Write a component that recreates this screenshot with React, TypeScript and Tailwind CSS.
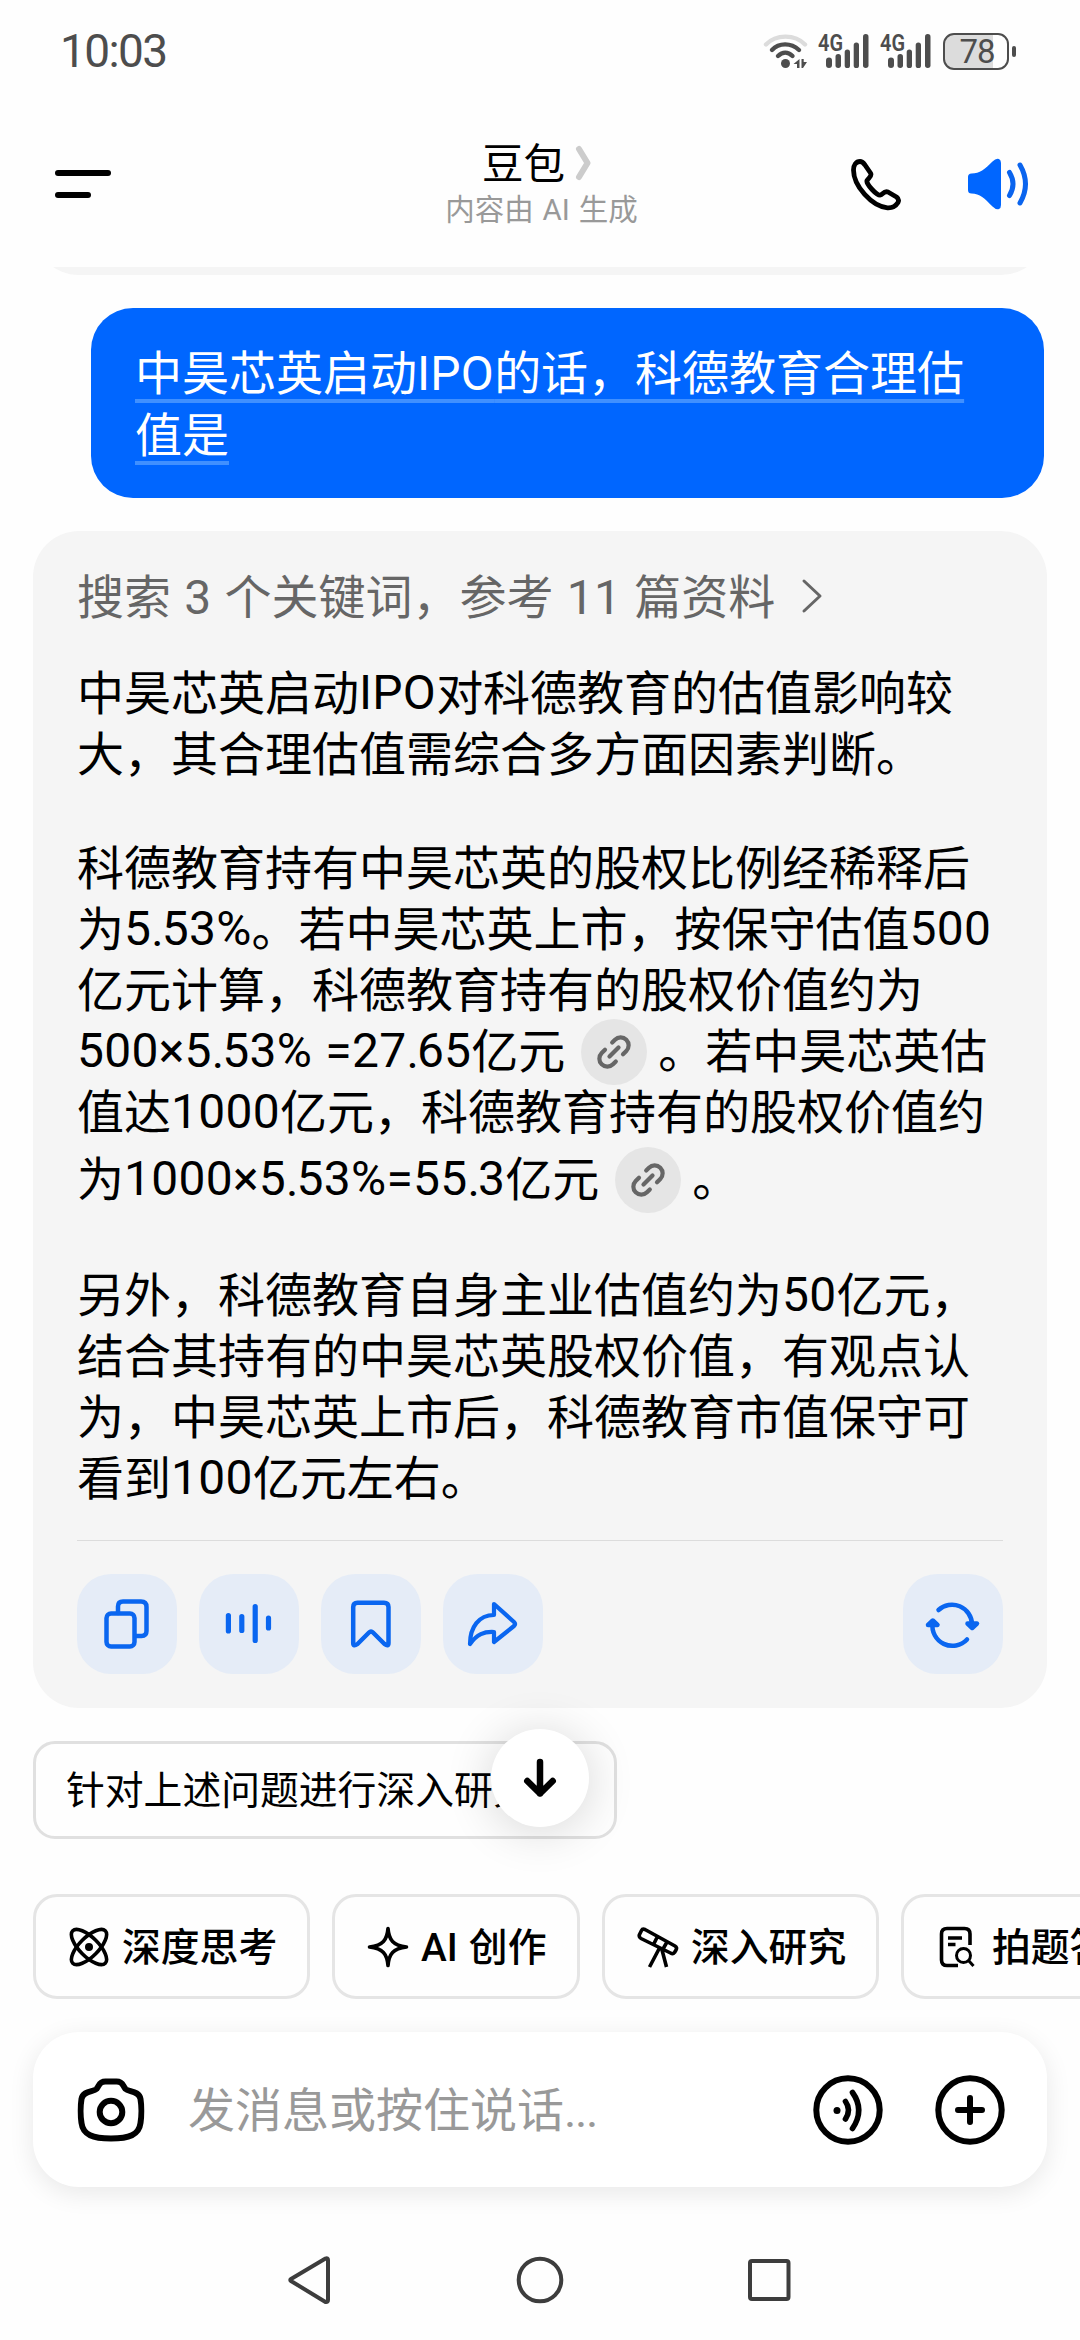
import type { ReactNode } from "react";

const FONT = 'font-[Roboto,"Noto_Sans_CJK_SC",sans-serif]';

// Latin runs are drawn a touch larger than the Han text, with tighter full stops
function Run({ text }: { text: string }) {
  return (
    <>
      {text.split(/([A-Za-z0-9%×= ]+|\.)/).map((part, i) => {
        if (i % 2 === 0) return <span key={i}>{part}</span>;
        return (
          <span
            key={i}
            className={part === "." ? "tracking-[-0.04em]" : "text-[1.02em] tracking-[0.006em] [word-spacing:0.02em]"}
          >
            {part}
          </span>
        );
      })}
    </>
  );
}

function Line({ children, className = "h-[61px]" }: { children: ReactNode; className?: string }) {
  return <div className={`flex items-center whitespace-pre ${className}`}>{children}</div>;
}

function Signal() {
  return (
    <svg width="50" height="36" viewBox="0 0 50 36" fill="#4d4d4d" className="overflow-visible">
      <text x="-1" y="17.500" fontSize="23" fontWeight="600" fontFamily="Roboto, sans-serif" textLength="25" lengthAdjust="spacingAndGlyphs">
        4G
      </text>
      <rect x="7" y="24.500" width="6" height="10.500" rx="3" />
      <rect x="16.500" y="21" width="5.500" height="14" rx="2.700" />
      <rect x="25.700" y="16.500" width="5.300" height="18.500" rx="2.600" />
      <rect x="34.700" y="9.500" width="5.300" height="25.500" rx="2.600" />
      <rect x="44" y="1" width="5.500" height="34" rx="2.700" />
    </svg>
  );
}

function StatusBar() {
  return (
    <div className="flex h-[100px] shrink-0 items-center justify-between pt-0.5 pr-[64px] pl-[60px] text-[#4d4d4d]">
      <span className="text-[46px] leading-none tracking-[-0.035em]">10:03</span>
      <div className="flex items-center">
        <svg width="46" height="36" viewBox="0 0 46 36" fill="none" strokeLinecap="round" strokeWidth="4.400">
          <path d="M3 11.500C13 1 32 1 42 11.500" stroke="#dcdcdc" />
          <path d="M9 17C16 9.500 28 9.500 36 17" stroke="#4d4d4d" />
          <path d="M15 23C19.500 18.500 25 18.500 29.500 23" stroke="#4d4d4d" />
          <circle cx="22.500" cy="30.500" r="4.500" fill="#4d4d4d" />
          <path d="M36.500 26v9h-2.500v-4h-3.500zM38.500 26h2.200v3h3.300l-4 6h-1.500z" fill="#4d4d4d" />
        </svg>
        <div className="ml-[10px] flex gap-3">
          <Signal />
          <Signal />
        </div>
        <div className="ml-[12px] flex h-[37px] w-[66px] items-center rounded-[11px] border-[2.5px] border-[#4d4d4d] bg-[linear-gradient(to_right,#dcdcdc_48px,transparent_48px)]">
          <span className="w-full pl-[2px] text-center text-[33px] leading-none tracking-[-0.03em]">78</span>
        </div>
        <div className="ml-[3px] h-[11px] w-[4px] rounded-sm bg-[#4d4d4d]" />
      </div>
    </div>
  );
}

function Header() {
  return (
    <header className="flex h-[167px] shrink-0 items-center justify-between pr-[49px] pl-[55px]">
      <div className="flex w-[180px] flex-col gap-4">
        <div className="h-[6px] w-[56px] rounded-full bg-black" />
        <div className="h-[6px] w-[36px] rounded-full bg-black" />
      </div>
      <div className="flex flex-col items-center pt-1">
        <div className="flex items-center gap-[10px] pr-[8px] text-[41.500px] leading-[48px] text-black">
          豆包
          <svg width="18" height="36" viewBox="0 0 18 36" fill="none" stroke="#cccccc" strokeWidth="6" strokeLinecap="round" strokeLinejoin="round" className="mb-1">
            <path d="M4 4L12.500 18L4 32" />
          </svg>
        </div>
        <div className="text-[29.500px] leading-[42px] text-[#999] [word-spacing:1.5px]">内容由 AI 生成</div>
      </div>
      <div className="flex w-[183px] items-center gap-[65px]">
        <svg width="54" height="54" viewBox="0 0 54 54" fill="none" stroke="#000" strokeWidth="4.800" strokeLinejoin="round">
          <path d="M5.500 13C5.500 8 8 4.500 12 4.500C14.500 4.500 15.500 6 17 8L22.500 16C24.500 19 20.500 21 19 23.500C17.500 26.500 29 39 32.500 38C34.500 37.500 36 33.500 40 35L48.500 40C50.500 41.500 51 43.500 50 45.500C47.500 49.500 43.500 51 39.500 50.800C24 49.500 5.500 29 5.500 13Z" />
        </svg>
        <svg width="64" height="54" viewBox="0 0 64 54" fill="none">
          <path d="M1 20Q1 16.500 4.500 16.500C13 16.500 17.500 12.500 25.500 4.500Q29 1 32 2Q34 3 34 6V48Q34 51 32 52Q29 53 25.500 49.500C17.500 41.500 13 36.500 4.500 36.500Q1 36.500 1 33Z" fill="#0066ff" />
          <path d="M42.500 15.500Q49.500 27 42.500 38.500M53 8Q64 27 53 46" stroke="#0a64ee" strokeWidth="5" strokeLinecap="round" />
        </svg>
      </div>
    </header>
  );
}

function LinkBadge() {
  return (
    <span className="mr-[11px] ml-[16px] flex size-[66px] shrink-0 items-center justify-center rounded-full bg-[#e5e5e5]">
      <svg width="38" height="38" viewBox="0 0 38 38" fill="none" stroke="#666" strokeWidth="4.200" strokeLinecap="round">
        <path d="M17.200 9.500L20 6.700A7.800 7.800 0 0 1 31.300 18L28 21.300" />
        <path d="M20.800 28.500L18 31.300A7.800 7.800 0 0 1 6.700 20L10 16.700" />
        <path d="M14.500 23.500L23.500 14.500" />
      </svg>
    </span>
  );
}

function ActionButton({ children }: { children: ReactNode }) {
  return (
    <button className="flex size-[100px] items-center justify-center rounded-[34px] bg-[#e5ecf7]">
      <svg width="60" height="60" viewBox="0 0 60 60" fill="none" stroke="#0a66f0" strokeWidth="4.500" strokeLinejoin="round" strokeLinecap="round">
        {children}
      </svg>
    </button>
  );
}

function Answer() {
  return (
    <section className="mt-[33px] ml-[33px] flex h-[1177px] w-[1014px] shrink-0 flex-col rounded-[46px] bg-[#f5f5f5] px-[44px] pt-[36px] text-[47px] leading-[61px] text-black">
      <div className="flex h-[61px] items-center gap-[25px] whitespace-pre text-[#666]">
        <span>
          <Run text="搜索 3 个关键词，参考 11 篇资料" />
        </span>
        <svg width="24" height="36" viewBox="0 0 24 36" fill="none" stroke="#666" strokeWidth="3" strokeLinecap="round" strokeLinejoin="round" className="mb-1">
          <path d="M4 3L20 18L4 33" />
        </svg>
      </div>

      <div className="mt-[35px]">
        <Line><Run text="中昊芯英启动IPO对科德教育的估值影响较" /></Line>
        <Line><Run text="大，其合理估值需综合多方面因素判断。" /></Line>
      </div>

      <div className="mt-[53px]">
        <Line><Run text="科德教育持有中昊芯英的股权比例经稀释后" /></Line>
        <Line><Run text="为5.53%。若中昊芯英上市，按保守估值500" /></Line>
        <Line><Run text="亿元计算，科德教育持有的股权价值约为" /></Line>
        <Line>
          <Run text="500×5.53% =27.65亿元" />
          <LinkBadge />
          <Run text="。若中昊芯英估" />
        </Line>
        <Line><Run text="值达1000亿元，科德教育持有的股权价值约" /></Line>
        <Line className="h-[73px]">
          <Run text="为1000×5.53%=55.3亿元" />
          <LinkBadge />
          <Run text="。" />
        </Line>
      </div>

      <div className="mt-[49px]">
        <Line><Run text="另外，科德教育自身主业估值约为50亿元，" /></Line>
        <Line><Run text="结合其持有的中昊芯英股权价值，有观点认" /></Line>
        <Line><Run text="为，中昊芯英上市后，科德教育市值保守可" /></Line>
        <Line><Run text="看到100亿元左右。" /></Line>
      </div>

      <div className="mt-[31px] h-px bg-[#dcdcdc]" />

      <div className="mt-[33px] flex gap-[22px]">
        <ActionButton>
          <rect x="9.500" y="19.500" width="28" height="33" rx="4.500" />
          <path d="M21 19V12.500Q21 7.500 26 7.500H44Q49.500 7.500 49.500 13V37Q49.500 42 44.500 42H38.500" />
        </ActionButton>
        <ActionButton>
          <path d="M9.400 21.500V37M22.800 22.500V36.500M36.200 12.500V46.500M49.500 24V34" strokeWidth="5.200" />
        </ActionButton>
        <ActionButton>
          <path d="M12.200 13Q12.200 8.700 16.500 8.700H43Q47.500 8.700 47.500 13V49Q47.500 53 43.500 50L32 38.500Q30 36.500 28 38.500L16.500 50Q12.200 53 12.200 49Z" />
        </ActionButton>
        <ActionButton>
          <path d="M31 10L51 28Q53 30 51 32L31 48V38C21 37.500 14 40 7 50C7 33 16 21 31 21Z" strokeWidth="4.200" />
        </ActionButton>
        <div className="ml-auto">
          <ActionButton>
            <path d="M15.500 16A20 20 0 0 1 49 30M44 45.500A20 20 0 0 1 9.600 29" />
            <path d="M44.500 29.500L49.200 34L54 29.500ZM5 31L9.800 26.500L14.500 31Z" fill="#0a66f0" />
          </ActionButton>
        </div>
      </div>
    </section>
  );
}

function Chip({ icon, label, className }: { icon: ReactNode; label: string; className: string }) {
  return (
    <button className={`flex h-[105px] shrink-0 items-center whitespace-pre rounded-[24px] border-[3px] border-[#e5e5e5] text-[38.800px] font-medium text-black ${className}`}>
      <svg width="42" height="42" viewBox="0 0 42 42" fill="none" stroke="#000" strokeWidth="3.600" strokeLinejoin="round" className="mr-[12px] shrink-0">
        {icon}
      </svg>
      <span className="pt-[3px] leading-none">{label}</span>
    </button>
  );
}

function Chips() {
  return (
    <div className="mt-[55px] flex shrink-0 gap-[22px] overflow-hidden pl-[33px]">
      <Chip
        className="w-[277px] pl-[32px]"
        label="深度思考"
        icon={
          <>
            <ellipse cx="21" cy="21" rx="23" ry="9.500" transform="rotate(45 21 21)" />
            <ellipse cx="21" cy="21" rx="23" ry="9.500" transform="rotate(-45 21 21)" />
            <circle cx="21" cy="21" r="4" fill="#000" stroke="none" />
          </>
        }
      />
      <Chip
        className="w-[248px] pl-[32px] [word-spacing:1.5px]"
        label="AI 创作"
        icon={<path d="M21 2.500C22 14 26 19.500 39.500 21C26 22.500 22 28 21 39.500C20 28 16 22.500 2.500 21C16 19.500 20 14 21 2.500Z" />}
      />
      <Chip
        className="w-[277px] pl-[32px]"
        label="深入研究"
        icon={
          <path d="M8 3.500L38 20Q40.500 21.500 39 24L37.500 26.500Q36 28.500 33.500 27L4 12.500Q1.500 11 2.500 8.500L4.500 4.500Q5.500 2.500 8 3.500ZM20.500 10.500L16.500 18.500M30 16L26 23M22.500 22L12.500 41M24.500 22L29.500 41" />
        }
      />
      <Chip
        className="w-[277px] pl-[34px]"
        label="拍题答疑"
        icon={
          <>
            <path d="M20 39.500H9Q3.500 39.500 3.500 34V8Q3.500 2.500 9 2.500H26.500Q32 2.500 32 8V19M10 12H24M10 18.500H17.500" />
            <circle cx="25.500" cy="29.500" r="7" strokeWidth="3" />
            <path d="M30.500 34.500L35.500 40" strokeWidth="3" />
          </>
        }
      />
    </div>
  );
}

function Composer() {
  return (
    <div className="mt-[33px] ml-[33px] flex h-[155px] w-[1014px] shrink-0 items-center rounded-[46px] bg-white pr-[42px] pl-[44px] shadow-[0_6px_26px_rgba(0,0,0,0.09)]">
      <svg width="68" height="66" viewBox="0 0 68 66" fill="none" stroke="#000" strokeWidth="6">
        <path d="M28.500 4.500H39.500C46 4.500 45.500 8.500 48.500 12C51.500 15 62 13.500 63.500 22C64.500 28 64.500 40 63.500 46C62 58 52 61.500 34 61.500C16 61.500 6 58 4.500 46C3.500 40 3.500 28 4.500 22C6 13.500 16.500 15 19.500 12C22.500 8.500 22 4.500 28.500 4.500Z" />
        <circle cx="34" cy="35" r="11.300" />
      </svg>
      <span className="ml-[43px] flex-1 pt-[2px] text-[47px] leading-none text-[#999]">
        发消息或按住说话<span className="tracking-[-0.03em]">...</span>
      </span>
      <svg width="70" height="70" viewBox="0 0 70 70" fill="none" stroke="#000" strokeWidth="6" strokeLinecap="round">
        <circle cx="35" cy="35" r="31.700" />
        <circle cx="24" cy="35.500" r="3.500" fill="#000" stroke="none" />
        <path d="M32.500 26.500Q38.500 35 32.500 44M39.500 17.500Q52 35 39.500 53.500" strokeWidth="5.600" />
      </svg>
      <svg width="70" height="70" viewBox="0 0 70 70" fill="none" stroke="#000" strokeWidth="6" strokeLinecap="round" className="ml-[52px]">
        <circle cx="35" cy="35" r="31.700" />
        <path d="M35 23V47M23 35H47" />
      </svg>
    </div>
  );
}

function NavBar() {
  return (
    <div className="mt-[68px] flex shrink-0 items-center justify-center gap-[179px]">
      <svg width="50" height="50" viewBox="0 0 50 50" fill="none" stroke="#3d3d3d" strokeWidth="4" strokeLinejoin="round">
        <path d="M5 24Q3.500 25 5 26L39.500 47Q42 47.500 42 45V5Q42 2.500 39.500 3.500Z" />
      </svg>
      <svg width="50" height="50" viewBox="0 0 50 50" fill="none" stroke="#3d3d3d" strokeWidth="4">
        <circle cx="25" cy="25" r="21.300" />
      </svg>
      <svg width="50" height="50" viewBox="0 0 50 50" fill="none" stroke="#3d3d3d" strokeWidth="4">
        <rect x="6" y="6" width="38.500" height="38" rx="2" />
      </svg>
    </div>
  );
}

export default function App() {
  return (
    <div className={`flex h-[2340px] w-[1080px] flex-col overflow-hidden bg-[#fefefe] ${FONT}`}>
      <StatusBar />
      <Header />

      {/* tail of the previous message, scrolled under the header */}
      <div className="ml-[33px] flex h-2 w-[1014px] shrink-0 flex-col justify-end overflow-hidden">
        <div className="h-[100px] shrink-0 rounded-[46px] bg-[#f5f5f5]" />
      </div>

      <div className="mt-[33px] ml-[91px] h-[190px] w-[953px] shrink-0 rounded-[42px] bg-[#0066ff] pt-[35px] pl-[44px] text-[47px] leading-[61px] whitespace-pre text-white">
        <span className="underline decoration-[#4090ff] decoration-[4px] underline-offset-[9px] [text-decoration-skip-ink:none]">
          <Run text={"中昊芯英启动IPO的话，科德教育合理估\n值是"} />
        </span>
      </div>

      <Answer />

      <div className="relative mt-[33px] ml-[33px] h-[98px] w-[584px] shrink-0 rounded-[22px] border-[3px] border-[#e0e0e0] pt-[2px] pl-[30px] text-[38.800px] leading-[90px] text-black">
        针对上述问题进行深入研究
        <button className="absolute top-[-15px] left-[455px] flex size-[98px] items-center justify-center rounded-full bg-white shadow-[0_4px_48px_rgba(0,0,0,0.16)]">
          <svg width="40" height="44" viewBox="0 0 40 44" fill="none" stroke="#000" strokeWidth="6.500" strokeLinecap="round" strokeLinejoin="round">
            <path d="M20 6V37.500M7.300 25L20 37.500L32.700 25" />
          </svg>
        </button>
      </div>

      <Chips />
      <Composer />
      <NavBar />
    </div>
  );
}
